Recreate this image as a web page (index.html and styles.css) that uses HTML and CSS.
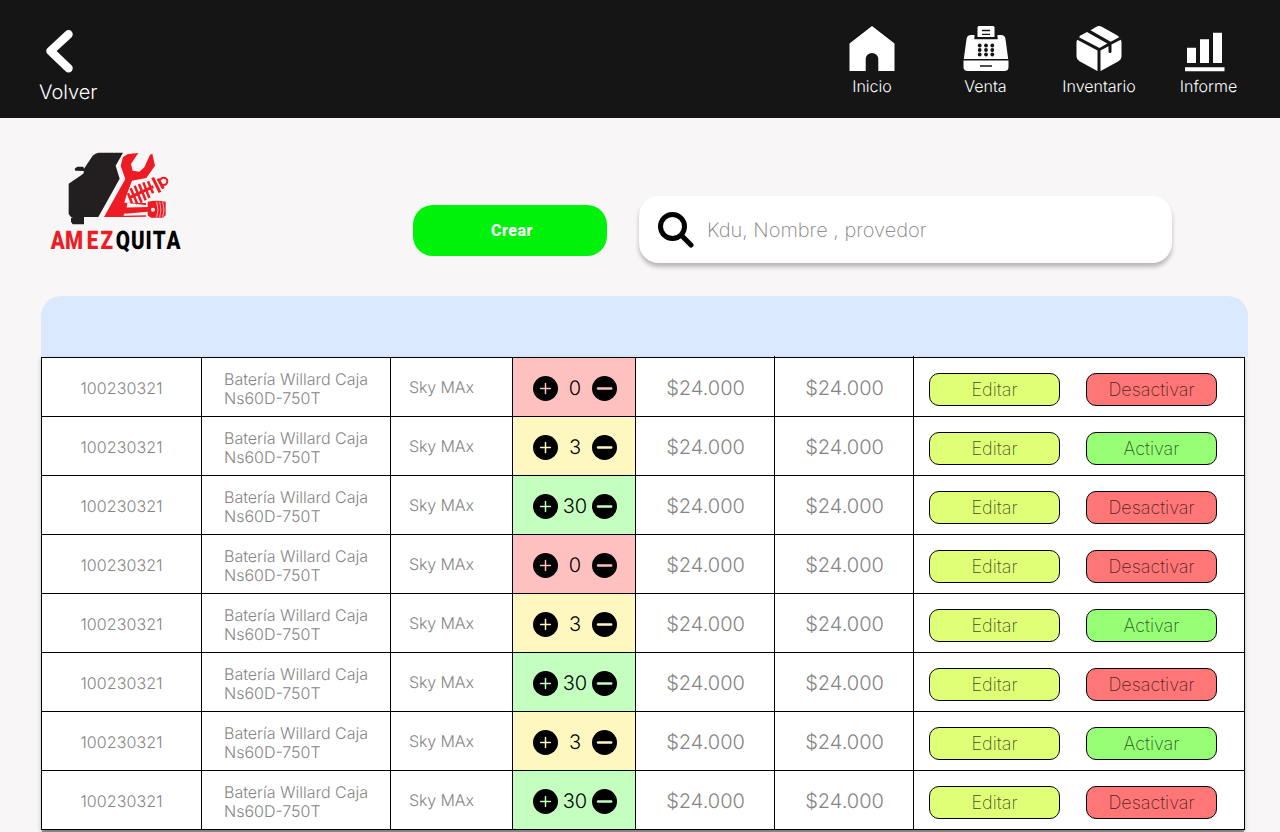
FILE: index.html
```html
<!DOCTYPE html>
<html lang="es">
<head>
<meta charset="utf-8">
<title>Inventario</title>
<link rel="stylesheet" href="styles.css">
</head>
<body>
<svg class="defs" width="0" height="0">
  <symbol id="plus" viewBox="0 0 25 25"><circle cx="12.5" cy="12.5" r="12.5"/><path d="M12.5 7.6v9.8M7.6 12.5h9.8" fill="none" stroke="currentColor" stroke-width="1.5" stroke-linecap="round"/></symbol>
  <symbol id="minus" viewBox="0 0 25 25"><circle cx="12.5" cy="12.5" r="12.5"/><path d="M6 12.5h13.2" fill="none" stroke="currentColor" stroke-width="2.4" stroke-linecap="round"/></symbol>
</svg>
<header class="topbar">
  <a class="back">
    <svg width="28" height="44" viewBox="0 0 28 44"><path d="M22.500 5.300 4.500 22l18 17.300" fill="none" stroke="#fff" stroke-width="8.500" stroke-linecap="round" stroke-linejoin="round"/></svg>
    <span>Volver</span>
  </a>
  <nav class="nav">
    <a class="nav-item">
      <svg width="46" height="46" viewBox="0 0 46 46"><path fill="#fff" d="M.5 17.500 23 0l22.500 17.500V45H29.300V33.300a6.300 6.300 0 0 0-12.600 0V45H.5z"/></svg>
      <span>Inicio</span>
    </a>
    <a class="nav-item">
      <svg width="46" height="46" viewBox="0 0 46 46"><g fill="#fff"><path d="M14.500 11V1.500A1.500 1.500 0 0 1 16 0h14a1.500 1.500 0 0 1 1.500 1.500V11z"/><path d="M.8 33 3.600 12.500Q4.200 9 8 9h3.500v3.800h23V9H38q3.800 0 4.400 3.500L45.200 33z"/><path d="M.5 34.500h45V41a4 4 0 0 1-4 4h-37a4 4 0 0 1-4-4z"/></g><path d="M11.500 12.500h23M19 4.500h8M19 8.300h8M17 40h12" stroke="#151515" stroke-width="1.300"/><g fill="#151515"><circle cx="16.700" cy="19.500" r="1.900"/><circle cx="23" cy="19.500" r="1.900"/><circle cx="29.300" cy="19.500" r="1.900"/><circle cx="16.700" cy="24" r="1.900"/><circle cx="23" cy="24" r="1.900"/><circle cx="29.300" cy="24" r="1.900"/><circle cx="16.700" cy="28.500" r="1.900"/><circle cx="23" cy="28.500" r="1.900"/><circle cx="29.300" cy="28.500" r="1.900"/></g></svg>
      <span>Venta</span>
    </a>
    <a class="nav-item">
      <svg width="46" height="46" viewBox="0 0 46 46"><g fill="#fff"><path d="M14.500 4.200 20 1q3-1.800 6.200 0L41 9.300q1.500.8 2.200 1.900l-8.500 4.600z"/><path d="M3 11.200q.6-1.100 2-1.900l6-3.300 20.300 11.600-7.800 4.300z"/><path d="M1.300 13.700 21.500 24.500V45q-.7-.2-1.500-.7L3.500 35.200Q.5 33.400.5 30.500V16.500q0-1.700.8-2.800z"/><path d="M24.500 24.500l8-4.300v5.300a1.500 1.500 0 0 0 3 0v-7l9.200-4.800q.8 1.100.8 2.800v14q0 2.900-3 4.700L26 44.300q-.8.5-1.500.7z"/></g></svg>
      <span>Inventario</span>
    </a>
    <a class="nav-item">
      <svg width="46" height="46" viewBox="0 0 46 46"><path fill="#fff" d="M0 41.200h39.500v4H0zM2 21.700h9V37H2zM15 13.200h9V37h-9zM28 6.800h9V37h-9z"/></svg>
      <span>Informe</span>
    </a>
  </nav>
</header>
<main>
  <section class="tools">
    <svg class="logo" width="132" height="102" viewBox="30 36 396 306">
      <path fill="#231f20" d="M176 38h73l-22 39 12 39-64 115h-43v22H98l-5-8v-11h5l-6-4-6-8v-91l44-30 2-8-26-1-2-6 8-6h18l2 6 26-39q8-8 18-9z"/>
      <path fill="#ed1c24" d="M249 51l15-9 31-3-22 33 5 20 20 3 15-13 17-38 7-3 8 36-26 37-43 8-17 45-6 21 65 1v41l-56 1h-70l64-114-14-40z"/>
      <path fill="#f8f6f7" d="M262 188l58 8v7h-60zM255 219l65-5v12l-70 1z"/>
      <path fill="none" stroke="#ed1c24" stroke-width="7.500" d="M272 145l20 47M284 137l21 51M297 132l20 49M310 127l18 47M324 124l15 36M264 160l12 30"/>
      <path fill="none" stroke="#ed1c24" stroke-width="9" d="M270 172l70-32M338 113l22 44M354 116l16 30"/>
      <circle cx="371" cy="124" r="11" fill="none" stroke="#ed1c24" stroke-width="6"/>
      <path fill="#ed1c24" d="M256 203l67-2v-16q28-5 54 0v41l-8 7h-36l-10-7v-11l-67 6z"/>
      <path stroke="#f8f6f7" stroke-width="2" fill="none" d="M350 185q8 25 0 47M359 185q8 25 0 47M368 185q8 25 0 47"/>
      <circle cx="339" cy="209" r="6" fill="#f8f6f7"/>
      <g class="brand" transform="scale(.8 1)">
        <text x="40 94 175 227" y="328" fill="#ed1c24">AMEZ</text>
        <text x="284 341 396 423 474" y="328" fill="#000">QUITA</text>
      </g>
    </svg>
    <button class="create">Crear</button>
    <label class="search">
      <svg width="36" height="36" viewBox="0 0 36 36"><circle cx="14.500" cy="14.500" r="12" fill="none" stroke="#000" stroke-width="5"/><path d="M23.500 23.500l9.500 9.500" stroke="#000" stroke-width="5" stroke-linecap="round"/></svg>
      <span>Kdu, Nombre , provedor</span>
    </label>
  </section>
  <div class="table-head"></div>
  <section class="table">
    <div class="row"><div class="code">100230321</div><div class="name">Batería Willard Caja<br>Ns60D-750T</div><div class="maker">Sky MAx</div><div class="stock out"><svg><use href="#plus"/></svg><b>0</b><svg><use href="#minus"/></svg></div><div class="price">$24.000</div><div class="price">$24.000</div><div class="actions"><button class="edit">Editar</button><button class="off">Desactivar</button></div></div>
    <div class="row"><div class="code">100230321</div><div class="name">Batería Willard Caja<br>Ns60D-750T</div><div class="maker">Sky MAx</div><div class="stock low"><svg><use href="#plus"/></svg><b>3</b><svg><use href="#minus"/></svg></div><div class="price">$24.000</div><div class="price">$24.000</div><div class="actions"><button class="edit">Editar</button><button class="on">Activar</button></div></div>
    <div class="row"><div class="code">100230321</div><div class="name">Batería Willard Caja<br>Ns60D-750T</div><div class="maker">Sky MAx</div><div class="stock full"><svg><use href="#plus"/></svg><b>30</b><svg><use href="#minus"/></svg></div><div class="price">$24.000</div><div class="price">$24.000</div><div class="actions"><button class="edit">Editar</button><button class="off">Desactivar</button></div></div>
    <div class="row"><div class="code">100230321</div><div class="name">Batería Willard Caja<br>Ns60D-750T</div><div class="maker">Sky MAx</div><div class="stock out"><svg><use href="#plus"/></svg><b>0</b><svg><use href="#minus"/></svg></div><div class="price">$24.000</div><div class="price">$24.000</div><div class="actions"><button class="edit">Editar</button><button class="off">Desactivar</button></div></div>
    <div class="row"><div class="code">100230321</div><div class="name">Batería Willard Caja<br>Ns60D-750T</div><div class="maker">Sky MAx</div><div class="stock low"><svg><use href="#plus"/></svg><b>3</b><svg><use href="#minus"/></svg></div><div class="price">$24.000</div><div class="price">$24.000</div><div class="actions"><button class="edit">Editar</button><button class="on">Activar</button></div></div>
    <div class="row"><div class="code">100230321</div><div class="name">Batería Willard Caja<br>Ns60D-750T</div><div class="maker">Sky MAx</div><div class="stock full"><svg><use href="#plus"/></svg><b>30</b><svg><use href="#minus"/></svg></div><div class="price">$24.000</div><div class="price">$24.000</div><div class="actions"><button class="edit">Editar</button><button class="off">Desactivar</button></div></div>
    <div class="row"><div class="code">100230321</div><div class="name">Batería Willard Caja<br>Ns60D-750T</div><div class="maker">Sky MAx</div><div class="stock low"><svg><use href="#plus"/></svg><b>3</b><svg><use href="#minus"/></svg></div><div class="price">$24.000</div><div class="price">$24.000</div><div class="actions"><button class="edit">Editar</button><button class="on">Activar</button></div></div>
    <div class="row"><div class="code">100230321</div><div class="name">Batería Willard Caja<br>Ns60D-750T</div><div class="maker">Sky MAx</div><div class="stock full"><svg><use href="#plus"/></svg><b>30</b><svg><use href="#minus"/></svg></div><div class="price">$24.000</div><div class="price">$24.000</div><div class="actions"><button class="edit">Editar</button><button class="off">Desactivar</button></div></div>
  </section>
</main>
</body>
</html>
```
FILE: styles.css
```css
* { box-sizing: border-box; }
body { margin: 0; height: 832px; overflow: hidden; background: #f8f6f7; font-family: Inter, sans-serif; font-weight: 300; text-rendering: geometricPrecision; }
svg { display: block; flex: none; }
.defs { display: none; }
button { font-family: inherit; padding: 0; }

.topbar { height: 118px; background: #151515; color: #fff; display: flex; justify-content: space-between; padding: 0 17px 0 39px; font-weight: 270; }
.back { display: flex; flex-direction: column; padding-top: 29px; font-size: 20px; line-height: 24px; }
.back svg { margin: 0 0 7px 7px; }
.nav { display: grid; grid-template-columns: 114px 113px 112px 108px; padding-top: 26px; }
.nav-item { display: flex; flex-direction: column; align-items: center; font-size: 16px; line-height: 19px; gap: 5px; }
.nav-item:nth-child(-n+2) { padding-right: 2px; }
.nav-item:last-child { padding-right: 1px; }
.nav-item:last-child svg { margin-left: -2px; }

.tools { display: flex; align-items: flex-start; height: 178px; padding-left: 50px; }
.logo { margin-top: 34px; overflow: visible; }
.brand { font-family: Roboto, sans-serif; font-weight: 900; font-size: 77px; }
.create { margin: 87px 0 0 231px; width: 194px; height: 51px; border: 0; border-radius: 20px; background: #00f10a; color: #fff; font: 800 16px Roboto, sans-serif; letter-spacing: .5px; padding-left: 4px; }
.search { margin: 78px 0 0 32px; width: 533px; height: 67px; border-radius: 20px; background: #fff; box-shadow: 0 4px 4px rgba(0, 0, 0, .25); display: flex; align-items: center; gap: 13px; padding-left: 19px; font-size: 20px; font-weight: 200; color: #808080; }

.table-head { margin-left: 41px; width: 1207px; height: 61px; background: #dbe9ff; border-radius: 20px 20px 0 0; }
.table { margin-left: 41px; width: 1204px; border: solid #000; border-width: 0 1px 1px 0; background: #fff; box-shadow: 0 3px 0 -1px rgba(0, 0, 0, .35), 0 2px 4px rgba(0, 0, 0, .25); }
.row { display: grid; grid-template-columns: 160px 189px 122px 123px 139px 139px 331px; height: 59px; }
.row > div { position: relative; border: solid #000; border-width: 1px 0 0 1px; display: flex; align-items: center; color: #858585; font-size: 16px; line-height: 19px; }
.row .code { justify-content: center; padding-top: 3px; letter-spacing: .1px; }
.row .name { display: block; padding: 12px 0 0 22px; }
.row .maker { padding-left: 18px; letter-spacing: -.1px; }
.row .stock { padding: 4px 0 0 20px; }
.stock svg { width: 25px; height: 25px; margin-top: -1px; }
.stock svg:last-child { margin-top: -2px; }
.stock b { width: 34px; text-align: center; color: #000; font-size: 20px; font-weight: 300; margin-top: -2px; }
.row .price { justify-content: center; font-size: 20px; padding: 3px 0 0 1px; }
.row .actions { gap: 26px; align-items: flex-start; padding: 15px 0 0 15px; }
.out { background: #ffc0c0; }
.low { background: #fff7c0; }
.full { background: #c4ffc0; }
.stock.out svg { color: #ffc0c0; }
.stock.low svg { color: #fff7c0; }
.stock.full svg { color: #c4ffc0; }
.row:first-child .price + div::before { content: ""; position: absolute; left: -1px; top: -2px; width: 1px; height: 2px; background: #000; }

.actions button { width: 131px; height: 33px; border: 1px solid #000; border-radius: 10px; font-size: 18px; font-weight: 200; color: rgba(0, 0, 0, .72); }
.edit { background: #dfff76; }
.off { background: #ff7676; }
.on { background: #97ff76; }
```
